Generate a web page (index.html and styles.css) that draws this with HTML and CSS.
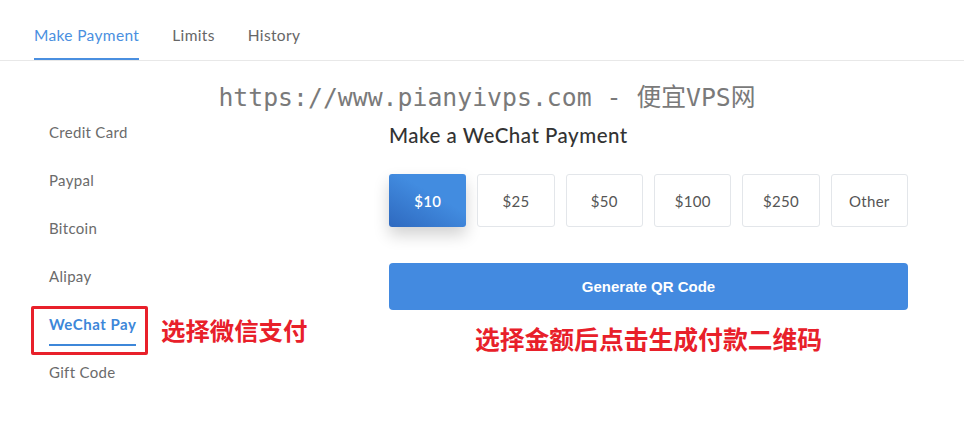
FILE: index.html
```html
<!DOCTYPE html>
<html lang="en">
<head>
    <meta charset="UTF-8">
    <meta name="viewport" content="width=device-width, initial-scale=1.0">
    <title>Make Payment</title>
    <link rel="stylesheet" href="styles.css">
</head>
<body>
    <nav class="tabs">
        <a class="tab active" href="#">Make Payment</a>
        <a class="tab" href="#">Limits</a>
        <a class="tab" href="#">History</a>
    </nav>

    <div class="watermark">https://www.pianyivps.com - 便宜VPS网</div>

    <div class="content">
        <ul class="methods">
            <li><a href="#">Credit Card</a></li>
            <li><a href="#">Paypal</a></li>
            <li><a href="#">Bitcoin</a></li>
            <li><a href="#">Alipay</a></li>
            <li class="selected">
                <a href="#">WeChat Pay</a>
                <span class="mark-box"></span>
                <span class="mark-text">选择微信支付</span>
            </li>
            <li><a href="#">Gift Code</a></li>
        </ul>

        <div class="payment">
            <h2>Make a WeChat Payment</h2>
            <div class="amounts">
                <button class="amount active">$10</button>
                <button class="amount">$25</button>
                <button class="amount">$50</button>
                <button class="amount">$100</button>
                <button class="amount">$250</button>
                <button class="amount">Other</button>
            </div>
            <button class="generate">Generate QR Code</button>
            <p class="note">选择金额后点击生成付款二维码</p>
        </div>
    </div>
</body>
</html>
```

FILE: styles.css
```css
body {
    margin: 0;
    background-color: #ffffff;
    font-family: Lato, "Open Sans", Arial, sans-serif;
    color: #666666;
    position: relative;
}
a {
    text-decoration: none;
    color: inherit;
}
.tabs {
    display: flex;
    gap: 33px;
    padding-left: 34px;
    border-bottom: 1px solid #e8e8e8;
}
.tab {
    display: block;
    padding-top: 25px;
    padding-bottom: 13px;
    line-height: 20px;
    font-size: 15.5px;
    letter-spacing: 0.35px;
    color: #666666;
    border-bottom: 2px solid transparent;
}
.tab.active {
    color: #4a8fe0;
    border-bottom-color: #4a8fe0;
}
.watermark {
    position: absolute;
    top: 83px;
    left: 0;
    right: 0;
    padding-left: 10px;
    text-align: center;
    font-family: "DejaVu Sans Mono", "Noto Sans CJK SC", monospace;
    font-size: 24.8px;
    line-height: 30px;
    color: #7a7a7a;
    white-space: nowrap;
}
.content {
    display: flex;
}
.methods {
    list-style: none;
    margin: 0;
    padding: 47px 0 0 49px;
    width: 340px;
}
.methods li {
    position: relative;
    height: 48px;
}
.methods a {
    display: inline-block;
    padding-top: 14px;
    line-height: 20px;
    font-size: 15px;
    letter-spacing: 0.3px;
    color: #6b6b6b;
}
.methods .selected a {
    color: #3d87d9;
    font-weight: 700;
    letter-spacing: 0.5px;
    padding-bottom: 10px;
    border-bottom: 2px solid #3d87d9;
}
.mark-box {
    position: absolute;
    left: -18px;
    top: 6px;
    width: 111px;
    height: 43px;
    border: 3px solid #e8202a;
    border-radius: 2px;
}
.mark-text {
    position: absolute;
    left: 112px;
    top: 15px;
    font-family: "Noto Sans CJK SC", sans-serif;
    font-size: 24.4px;
    line-height: 30px;
    font-weight: 700;
    color: #e8202a;
    white-space: nowrap;
}
.payment {
    width: 519px;
    padding-top: 62px;
}
.payment h2 {
    margin: 0;
    font-size: 20.5px;
    line-height: 24px;
    font-weight: 500;
    letter-spacing: 0.5px;
    color: #333333;
}
.amounts {
    display: grid;
    grid-template-columns: repeat(6, 1fr);
    gap: 11px;
    margin-top: 27px;
}
.amount {
    height: 53px;
    border: 1px solid #e3e6ea;
    border-radius: 3px;
    background-color: #ffffff;
    font-family: Lato, "Open Sans", Arial, sans-serif;
    font-size: 15px;
    letter-spacing: 0.3px;
    color: #555555;
    cursor: pointer;
}
.amount.active {
    border: none;
    color: #ffffff;
    font-weight: 600;
    background: linear-gradient(30deg, #2e69bf, #428ce0 60%);
    box-shadow: 0 8px 16px rgba(0, 0, 0, 0.18);
}
.generate {
    display: block;
    width: 100%;
    height: 47px;
    margin-top: 36px;
    border: none;
    border-radius: 4px;
    background-color: #438ae0;
    color: #ffffff;
    font-family: "Liberation Sans", Arial, sans-serif;
    font-size: 15px;
    font-weight: 700;
    cursor: pointer;
}
.note {
    margin: 13px 0 0;
    text-align: center;
    font-family: "Noto Sans CJK SC", sans-serif;
    font-size: 24.8px;
    line-height: 30px;
    font-weight: 700;
    color: #e8202a;
}
```
